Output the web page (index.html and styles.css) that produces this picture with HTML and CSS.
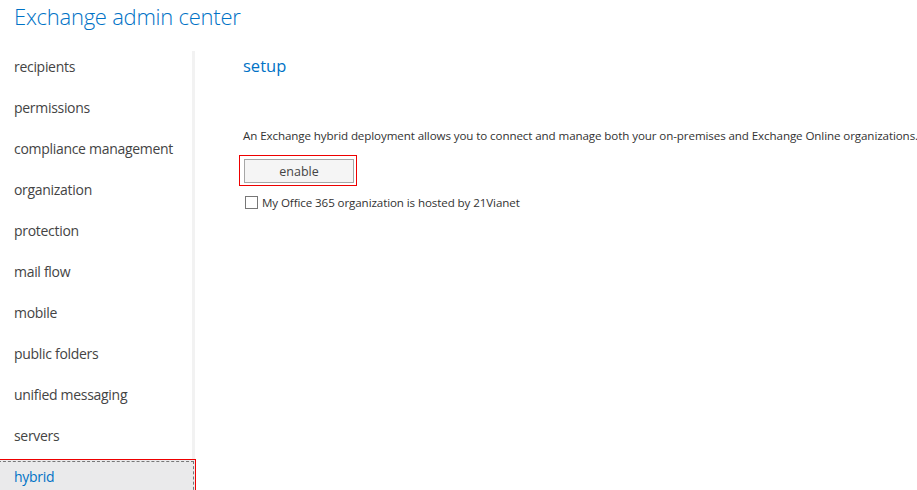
FILE: index.html
```html
<!DOCTYPE html>
<html>
<head>
<meta charset="utf-8">
<title>Exchange admin center</title>
<link rel="stylesheet" href="styles.css">
</head>
<body>
<header class="top">
  <h1 class="app-title">Exchange admin center</h1>
</header>
<div class="main">
  <nav class="sidebar">
    <ul class="nav">
      <li class="nav-item">recipients</li>
      <li class="nav-item">permissions</li>
      <li class="nav-item">compliance management</li>
      <li class="nav-item">organization</li>
      <li class="nav-item">protection</li>
      <li class="nav-item">mail flow</li>
      <li class="nav-item">mobile</li>
      <li class="nav-item">public folders</li>
      <li class="nav-item">unified messaging</li>
      <li class="nav-item">servers</li>
      <li class="nav-item nav-item-selected">hybrid</li>
    </ul>
  </nav>
  <section class="content">
    <h2 class="page-title">setup</h2>
    <p class="desc">An Exchange hybrid deployment allows you to connect and manage both your on-premises and Exchange Online organizations.</p>
    <div class="btn-highlight">
      <button class="btn" type="button">enable</button>
    </div>
    <label class="check">
      <span class="check-box"></span>
      <span class="check-label">My Office 365 organization is hosted by 21Vianet</span>
    </label>
  </section>
</div>
</body>
</html>
```
FILE: styles.css
```css
html, body {
  margin: 0;
  padding: 0;
  background: #fff;
  overflow: hidden;
}
body {
  width: 917px;
  height: 490px;
  font-family: "Open Sans", "Noto Sans", sans-serif;
  color: #333;
}
.top {
  height: 49px;
  padding-left: 14px;
}
.app-title {
  margin: 0;
  padding-top: 2px;
  font-size: 22px;
  font-weight: 300;
  color: #0072c6;
  line-height: 28px;
  letter-spacing: -0.25px;
}
.main {
  display: flex;
  height: 441px;
}
.sidebar {
  width: 192px;
  border-right: 3px solid #f2f2f2;
  margin-top: 2px;
  flex: none;
}
.nav {
  list-style: none;
  margin: -2px 0 0 0;
  padding: 0;
  display: flex;
  flex-direction: column;
  gap: 5px;
}
.nav-item {
  height: 36px;
  line-height: 36px;
  padding-left: 14px;
  font-size: 14px;
  color: #444;
  letter-spacing: -0.3px;
  white-space: nowrap;
}
.nav-item-selected {
  background: #eaeaeb;
  color: #0072c6;
  border: 1px solid #e00;
  margin-left: -4px;
  margin-right: -4px;
  padding-left: 17px;
  line-height: 34px;
  outline: 1px dashed #777;
  outline-offset: -3px;
}
.content {
  padding-left: 48px;
  flex: 1;
  min-width: 0;
  white-space: nowrap;
}
.page-title {
  margin: 0;
  padding-top: 5px;
  font-size: 16.5px;
  font-weight: 400;
  color: #0072c6;
  line-height: 24px;
}
.desc {
  margin: 50px 0 0 0;
  font-size: 11.6px;
  line-height: 16px;
  color: #333;
  letter-spacing: -0.1px;
}
.btn-highlight {
  margin: 11px 0 0 -4px;
  width: 112px;
  height: 26px;
  padding: 3px 0 0 4px;
  border: 1px solid #e00;
  display: flex;
  align-items: flex-start;
}
.btn {
  width: 110px;
  height: 24px;
  border: 1px solid #a6a6a6;
  background: #f5f5f5;
  font-family: inherit;
  font-size: 12.5px;
  color: #444;
  padding: 0;
  flex: none;
}
.check {
  display: flex;
  align-items: center;
  gap: 4px;
  margin: 8px 0 0 2px;
  height: 16px;
}
.check-box {
  width: 11px;
  height: 11px;
  border: 1px solid #777;
  background: #fff;
  flex: none;
}
.check-label {
  font-size: 11.6px;
  color: #333;
  letter-spacing: -0.1px;
}
```
